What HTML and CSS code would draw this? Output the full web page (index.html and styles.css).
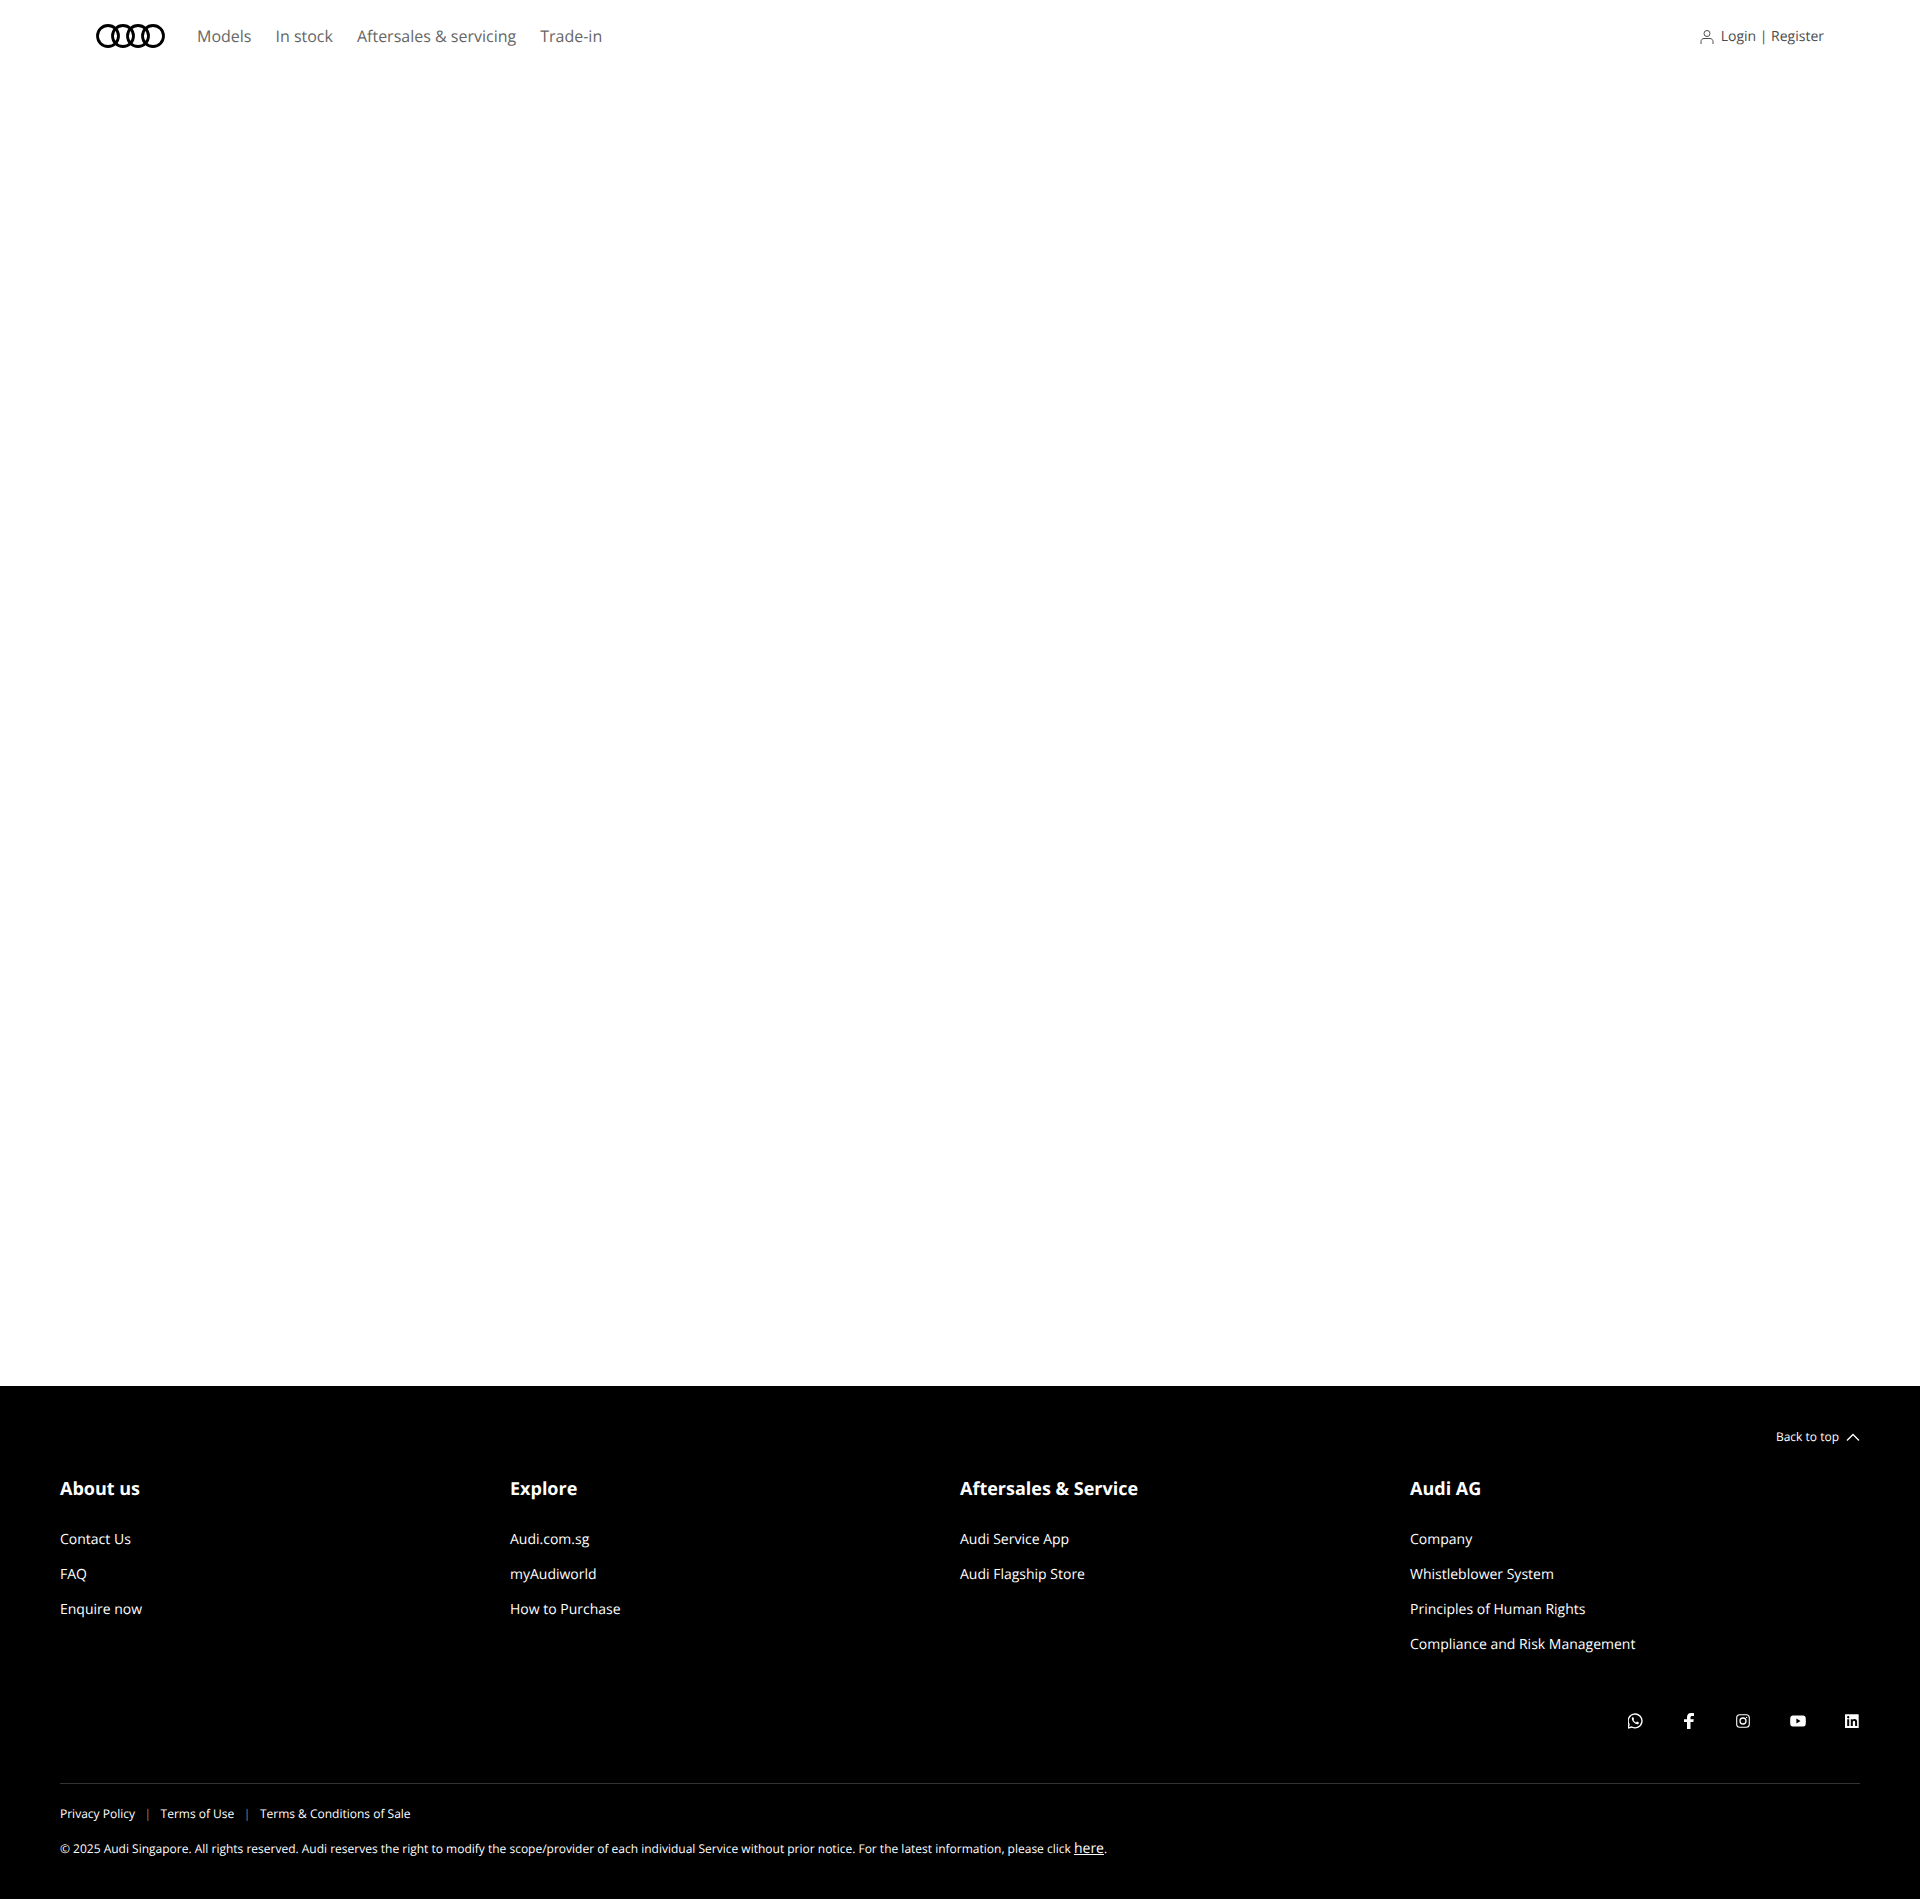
FILE: index.html
```html
<!DOCTYPE html>
<html lang="en">
<head>
  <meta charset="UTF-8" />
  <meta name="viewport" content="width=device-width, initial-scale=1.0" />
  <title>Audi Singapore</title>
  <link rel="stylesheet" href="styles.css">
</head>
<body>
  <header class="top-nav">
    <a class="logo" href="#" aria-label="Audi">
      <svg width="70" height="24" viewBox="0 0 70 24" fill="none" stroke="#000" stroke-width="2.800">
        <circle cx="12" cy="12" r="10.500" />
        <circle cx="27" cy="12" r="10.500" />
        <circle cx="42" cy="12" r="10.500" />
        <circle cx="57" cy="12" r="10.500" />
      </svg>
    </a>
    <nav class="main-links">
      <a href="#">Models</a>
      <a href="#">In stock</a>
      <a href="#">Aftersales &amp; servicing</a>
      <a href="#">Trade-in</a>
    </nav>
    <a class="login" href="#">
      <svg class="login-icon" width="16" height="16" viewBox="0 0 16 16" fill="none" stroke="#4c4c4c" stroke-width="1">
        <circle cx="8" cy="4.500" r="3" />
        <path d="M2 15v-2.500c0-1.700 1.300-3 3-3h6c1.700 0 3 1.300 3 3V15" />
      </svg>
      <span class="login-text">Login | Register</span>
    </a>
  </header>

  <main class="content"></main>

  <footer class="footer">
    <div class="back-row">
      <a class="back-top" href="#">
        Back to top
        <svg width="14" height="8" viewBox="0 0 14 8" fill="none" stroke="#fff" stroke-width="1.300">
          <path d="M1 7.500l6-6 6 6" />
        </svg>
      </a>
    </div>

    <div class="columns">
      <div class="column">
        <h4>About us</h4>
        <a href="#">Contact Us</a>
        <a href="#">FAQ</a>
        <a href="#">Enquire now</a>
      </div>
      <div class="column">
        <h4>Explore</h4>
        <a href="#">Audi.com.sg</a>
        <a href="#">myAudiworld</a>
        <a href="#">How to Purchase</a>
      </div>
      <div class="column">
        <h4>Aftersales &amp; Service</h4>
        <a href="#">Audi Service App</a>
        <a href="#">Audi Flagship Store</a>
      </div>
      <div class="column">
        <h4>Audi AG</h4>
        <a href="#">Company</a>
        <a href="#">Whistleblower System</a>
        <a href="#">Principles of Human Rights</a>
        <a href="#">Compliance and Risk Management</a>
      </div>
    </div>

    <div class="social">
      <a href="#" aria-label="WhatsApp">
        <svg width="16" height="16" viewBox="1 0 16 16">
          <path fill="none" stroke="#fff" stroke-width="1.400" d="M1 15l1-3.700A6.900 6.900 0 1 1 4.700 14z" />
          <path fill="#fff" d="M5.700 4.300c-.3 0-.9.400-.9 1.400 0 2.200 3.200 5.500 5.500 5.500 1 0 1.500-.7 1.500-1.300 0-.3 0-.5-.2-.6l-1.400-.7c-.2-.1-.4 0-.5.100l-.6.700c-.8-.2-2.200-1.500-2.600-2.500l.5-.6c.1-.2.100-.3 0-.5l-.6-1.300c-.1-.2-.4-.2-.7-.2z" />
        </svg>
      </a>
      <a href="#" aria-label="Facebook">
        <svg width="16" height="16" viewBox="0 0 16 16">
          <path fill="#fff" d="M5 16V9H2V6.200h3V4.200C5 1.500 6.600 0 9 0c1.200 0 2.300.1 3 .2v2.700h-1.700C8.900 2.900 8.500 3.600 8.500 4.600v1.600h3.300L11.300 9H8.500v7z" />
        </svg>
      </a>
      <a href="#" aria-label="Instagram">
        <svg width="16" height="16" viewBox="1 0 16 16" fill="none" stroke="#fff">
          <rect x="1.700" y="1.700" width="12.600" height="12.600" rx="3" stroke-width="1.100" />
          <circle cx="8" cy="8" r="3" stroke-width="1.300" />
          <circle cx="11.600" cy="4.400" r=".7" fill="#fff" stroke="none" />
        </svg>
      </a>
      <a href="#" aria-label="YouTube">
        <svg width="16" height="16" viewBox="0 0 16 16">
          <path fill="#fff" d="M2.800 2.500h10.400c1.300 0 2.400 1 2.500 2.300.2 2 .2 4.400 0 6.400-.1 1.300-1.200 2.300-2.500 2.300H2.800C1.500 13.500.4 12.500.3 11.200c-.2-2-.2-4.400 0-6.400C.4 3.500 1.500 2.500 2.800 2.500z" />
          <path fill="#000" d="M6.400 5.600v4.800L10.500 8z" />
        </svg>
      </a>
      <a href="#" aria-label="LinkedIn">
        <svg width="16" height="16" viewBox="0 0 16 16">
          <path fill="#fff" fill-rule="evenodd" d="M1.500 1.300h12.700a.5.500 0 0 1 .5.500v12.700a.5.500 0 0 1-.5.500H1.500a.5.500 0 0 1-.5-.5V1.800a.5.500 0 0 1 .5-.5zM3.200 6.300v6.600h2V6.300zm1-3.200a1.100 1.100 0 1 0 0 2.300 1.100 1.100 0 0 0 0-2.300zm2.600 3.200v6.600h2V9.500c0-1 .3-1.700 1.200-1.700s1.100.7 1.100 1.700v3.400h2V9.100c0-1.800-.8-3-2.600-3-1 0-1.500.5-1.800 1V6.300z" />
        </svg>
      </a>
    </div>

    <div class="legal">
      <div class="legal-links">
        <a href="#">Privacy Policy</a>
        <span>|</span>
        <a href="#">Terms of Use</a>
        <span>|</span>
        <a href="#">Terms &amp; Conditions of Sale</a>
      </div>
      <p class="copyright">© 2025 Audi Singapore. All rights reserved. Audi reserves the right to modify the scope/provider of each individual Service without prior notice. For the latest information, please click <a href="#">here</a>.</p>
    </div>
  </footer>
</body>
</html>
```

FILE: styles.css
```css
body {
  margin: 0;
  padding: 0;
  background-color: white;
  font-family: "Open Sans", sans-serif;
  text-rendering: geometricPrecision;
}

a {
  color: inherit;
  text-decoration: none;
}

.top-nav {
  height: 72px;
  display: flex;
  align-items: center;
  padding: 0 96px;
}

.logo {
  display: flex;
  margin-right: 31px;
}

.main-links {
  display: flex;
  gap: 24px;
  font-size: 16px;
  color: #666;
}

.login {
  margin-left: auto;
  display: flex;
  align-items: center;
  gap: 6px;
  font-size: 14px;
  color: #4c4c4c;
}

.login-icon {
  margin-top: 2px;
}

.login-text {
  margin-top: 1px;
}

.content {
  height: 1314px;
}

.footer {
  height: 513px;
  box-sizing: border-box;
  padding: 41px 60px 0;
  background-color: black;
  color: white;
}

.back-row {
  display: flex;
  justify-content: flex-end;
}

.back-top {
  display: flex;
  align-items: center;
  gap: 7px;
  font-size: 12px;
  line-height: 20px;
}

.columns {
  display: grid;
  grid-template-columns: repeat(4, 1fr);
  margin-top: 29px;
  height: 217px;
}

.column h4 {
  margin: 0 0 20px;
  font-size: 18px;
  line-height: 26px;
  font-weight: 700;
}

.column a {
  display: block;
  font-size: 14px;
  line-height: 35px;
}

.social {
  display: flex;
  justify-content: flex-end;
  gap: 38px;
  margin-top: 20px;
  height: 16px;
}

.social a {
  display: flex;
}

.legal {
  margin-top: 54px;
  padding-top: 20px;
  border-top: 1px solid #333;
}

.legal-links {
  display: flex;
  gap: 9.500px;
  font-size: 12px;
  line-height: 20px;
}

.legal-links span {
  color: #888;
}

.copyright {
  margin: 15px 0 0;
  font-size: 12px;
  line-height: 20px;
}

.copyright a {
  font-size: 14px;
  text-decoration: underline;
}
```
